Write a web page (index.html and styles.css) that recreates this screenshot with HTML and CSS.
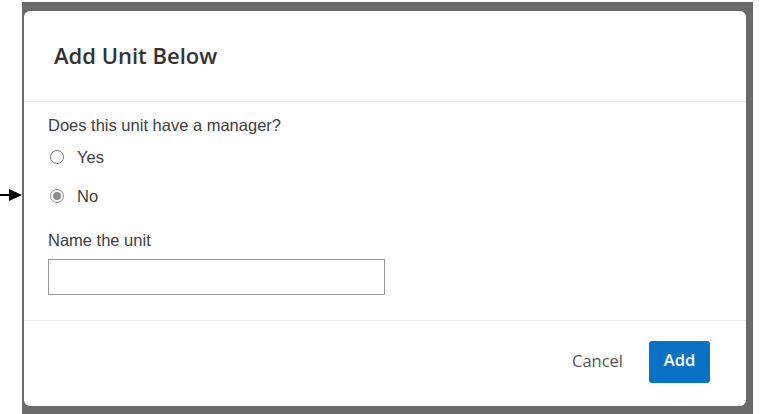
FILE: index.html
```html
<!DOCTYPE html>
<html lang="en">
<head>
<meta charset="utf-8">
<title>Add Unit Below</title>
<link rel="stylesheet" href="styles.css">
</head>
<body>
  <svg class="pointer" width="22" height="14" viewBox="0 0 22 14" aria-hidden="true">
    <line x1="0" y1="7" x2="12" y2="7" stroke="#000" stroke-width="2"/>
    <polygon points="9,1 22,7 9,13" fill="#000"/>
  </svg>
  <div class="backdrop">
    <div class="dialog" role="dialog" aria-labelledby="dlg-title">
      <header class="dialog-header">
        <h1 id="dlg-title" class="dialog-title">Add Unit Below</h1>
      </header>
      <section class="dialog-body">
        <p class="question">Does this unit have a manager?</p>
        <label class="radio-row">
          <span class="radio"></span>
          <span class="radio-label">Yes</span>
        </label>
        <label class="radio-row">
          <span class="radio radio-checked"></span>
          <span class="radio-label">No</span>
        </label>
        <p class="field-label">Name the unit</p>
        <input class="text-input" type="text" aria-label="Name the unit">
      </section>
      <footer class="dialog-footer">
        <button class="btn btn-link" type="button">Cancel</button>
        <button class="btn btn-primary" type="button">Add</button>
      </footer>
    </div>
  </div>
</body>
</html>
```

FILE: styles.css
```css
html, body {
  margin: 0;
  background: #ffffff;
}

body {
  padding: 2px 0 0 22px;
  height: 414px;
  box-sizing: border-box;
  overflow: hidden;
  font-family: "Liberation Sans", Arial, sans-serif;
  color: #3b3b3b;
}

.pointer {
  position: absolute;
  left: 0;
  top: 188px;
}

.backdrop {
  width: 731px;
  height: 412px;
  box-sizing: border-box;
  background: #6a6a6a;
  padding: 9px 7px 8px 2px;
}

.dialog {
  width: 722px;
  height: 395px;
  background: #ffffff;
  border-radius: 6px;
  display: flex;
  flex-direction: column;
}

.dialog-header {
  height: 88px;
  display: flex;
  align-items: center;
  padding-left: 30px;
  padding-bottom: 2px;
  border-bottom: 1px solid #ececec;
}

.dialog-title {
  margin: 0;
  font-family: "Open Sans", "Noto Sans", sans-serif;
  font-weight: 600;
  font-size: 22px;
  color: #333333;
}

.dialog-body {
  padding: 13px 24px 0 24px;
  height: 219px;
  box-sizing: border-box;
  border-bottom: 1px solid #ececec;
}

.question,
.field-label {
  margin: 0;
  font-size: 16.5px;
  line-height: 20px;
  color: #404040;
}

.radio-row {
  display: flex;
  align-items: center;
  gap: 13px;
  height: 20px;
  padding-left: 2px;
  margin-top: 12px;
}

.radio-row + .radio-row {
  margin-top: 19px;
}

.radio {
  width: 12px;
  height: 12px;
  border: 1px solid #7a7a7a;
  border-radius: 50%;
  box-sizing: content-box;
  display: flex;
  align-items: center;
  justify-content: center;
}

.radio-checked {
  border-color: #8a8a8a;
}

.radio-checked::after {
  content: "";
  width: 8px;
  height: 8px;
  border-radius: 50%;
  background: #8c8c8c;
}

.radio-label {
  font-size: 16.5px;
  color: #404040;
}

.field-label {
  margin-top: 24px;
}

.text-input {
  display: block;
  margin-top: 9px;
  width: 337px;
  height: 36px;
  box-sizing: border-box;
  border: 1px solid #9a9a9a;
  border-radius: 0;
  background: #ffffff;
}

.dialog-footer {
  flex: 1;
  display: flex;
  align-items: center;
  justify-content: flex-end;
  padding-right: 36px;
  padding-bottom: 4px;
  gap: 26px;
}

.btn {
  border: 0;
  cursor: pointer;
  font-family: "Open Sans", "Noto Sans", sans-serif;
  font-size: 16.5px;
}

.btn-link {
  background: none;
  color: #555555;
  padding: 0 0 3px 0;
}

.btn-primary {
  width: 61px;
  height: 42px;
  background: #0a72c4;
  color: #ffffff;
  border-radius: 3px;
  font-weight: 600;
  padding: 0 0 4px 0;
}
```
